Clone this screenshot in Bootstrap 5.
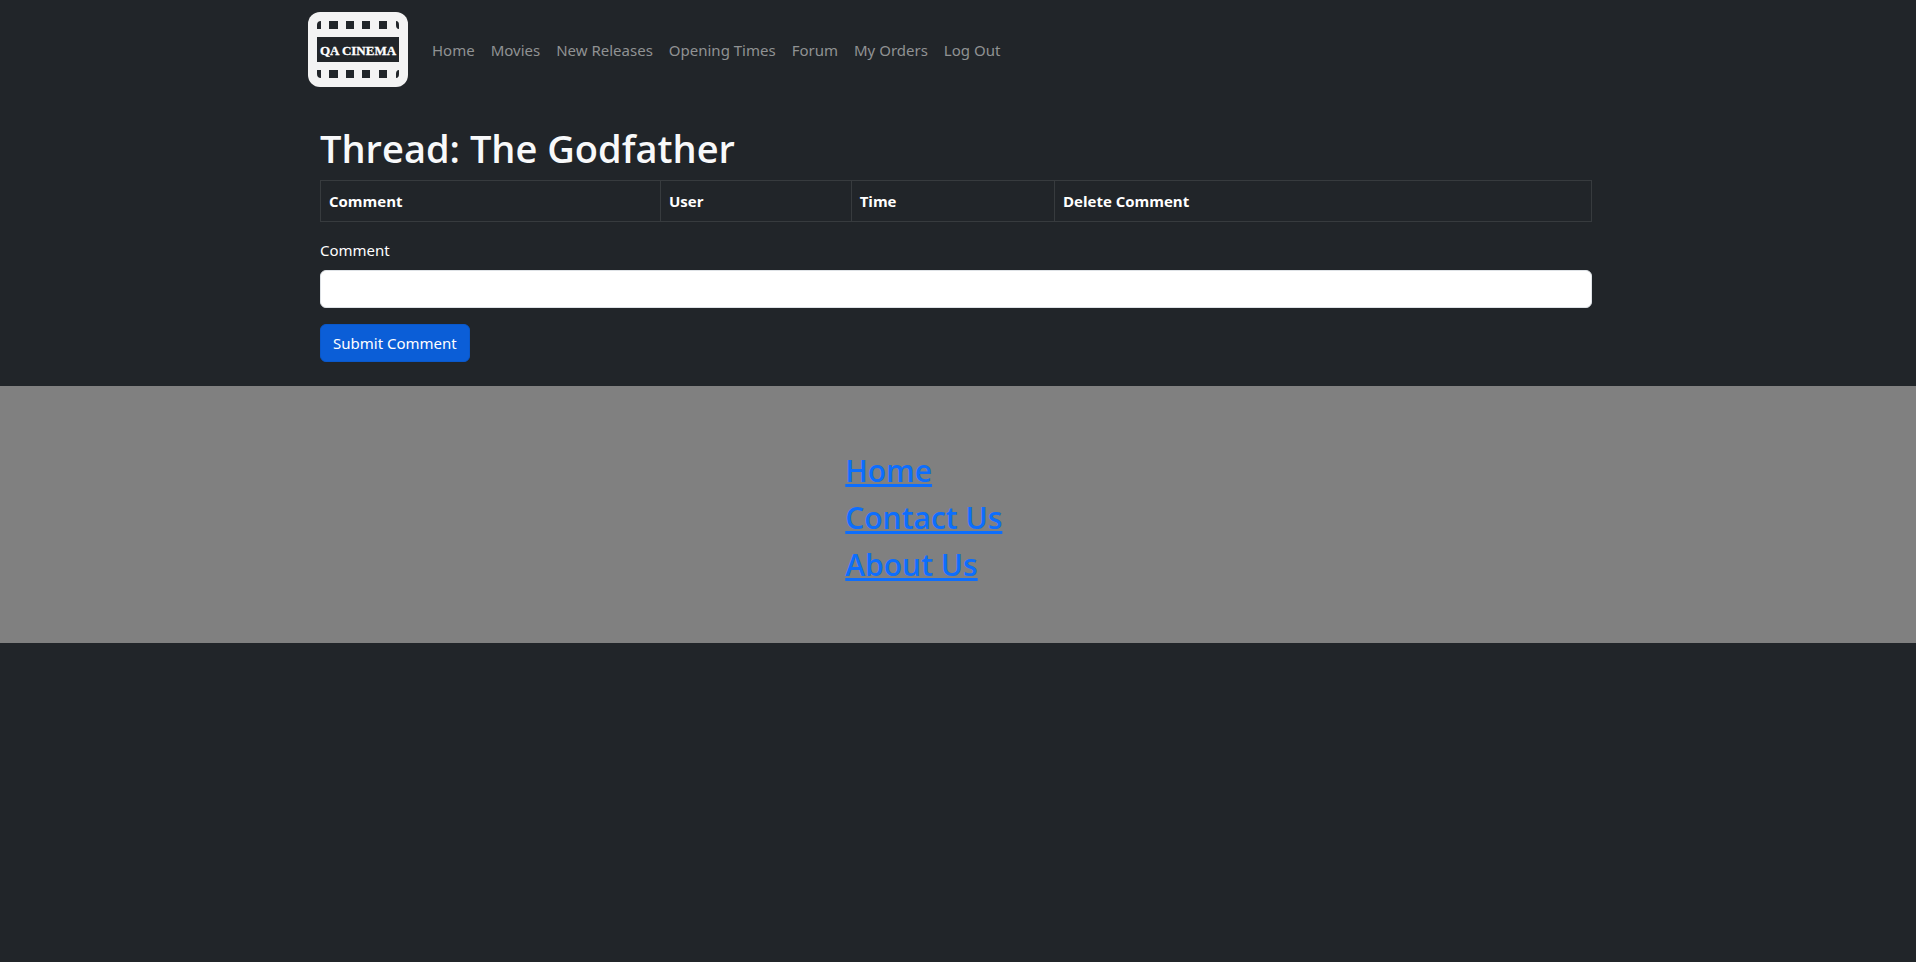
<!DOCTYPE html>
<html lang="en">
<head>
<meta charset="utf-8">
<meta name="viewport" content="width=device-width, initial-scale=1">
<title>QA Cinema - Thread</title>
<link href="https://cdn.jsdelivr.net/npm/bootstrap@5.3.0/dist/css/bootstrap.min.css" rel="stylesheet">
<style>
body { font-family: "Segoe UI", "Open Sans", "Noto Sans", sans-serif; font-size: 15px; line-height: 24px; background: #212529; color: #fff; }
.site-nav { --bs-navbar-color: #909293; --bs-navbar-hover-color: #c8c9ca; --bs-navbar-padding-y: 7px; }
.site-nav .nav-link, .submit-btn, .thread-form label { font-family: "Segoe UI", "Noto Sans", sans-serif; font-size: 15px; }
.thread-title { font-size: 38px; line-height: 47px; padding-top: 2px; font-weight: 600; color: #f8f9fa; }
.thread-table { --bs-table-bg: #212529; --bs-table-color: #fff; --bs-table-border-color: #373b3e; }
.col-comment { width: 26.75%; }
.col-user { width: 15%; }
.col-time { width: 16%; }
.comment-input { height: 38px; background: #fff; border-color: #dee2e6; }
.submit-btn { --bs-btn-bg: #0b5ed7; --bs-btn-border-color: #0a58ca; --bs-btn-font-size: 15px; --bs-btn-line-height: 24px; }
.site-footer { background: #808080; padding: 65px 0 59px 4px; }
.footer-links { margin-left: 44%; }
.footer-links a { color: #0d6efd; font-size: 30px; line-height: 39px; font-weight: 600; }
</style>
</head>
<body>
<div class="pe-1">
<nav class="navbar navbar-expand-lg site-nav" data-bs-theme="dark">
  <div class="container">
    <a class="navbar-brand" href="#" aria-label="QA Cinema">
      <svg class="d-block" width="100" height="75" viewBox="0 0 100 75">
        <rect width="100" height="75" rx="12" fill="#f3f3f3"/>
        <g fill="#212529">
          <rect x="9" y="25" width="82" height="25"/>
          <path d="M9 13q0-4 4-4v8H9zM21 9h9v8h-9zM38 9h8v8h-8zM54 9h8v8h-8zM71 9h8v8h-8zM88 9q3 0 3 4v4q-3 0-3-4z"/>
          <path d="M9 58h4v8q-4 0-4-4zM21 58h9v8h-9zM38 58h8v8h-8zM54 58h8v8h-8zM71 58h8v8h-8zM88 62q0-4 3-4v4q0 4-3 4z"/>
        </g>
        <text x="50" y="43" text-anchor="middle" font-family="Liberation Serif, serif" font-weight="700" font-size="13" fill="#fff" stroke="#fff" stroke-width=".3">QA CINEMA</text>
      </svg>
    </a>
    <button class="navbar-toggler" type="button" data-bs-toggle="collapse" data-bs-target="#mainNav" aria-controls="mainNav" aria-expanded="false" aria-label="Toggle navigation"><span class="navbar-toggler-icon"></span></button>
    <div class="collapse navbar-collapse" id="mainNav">
      <div class="navbar-nav">
        <a class="nav-link" href="#">Home</a>
        <a class="nav-link" href="#">Movies</a>
        <a class="nav-link" href="#">New Releases</a>
        <a class="nav-link" href="#">Opening Times</a>
        <a class="nav-link" href="#">Forum</a>
        <a class="nav-link" href="#">My Orders</a>
        <a class="nav-link" href="#">Log Out</a>
      </div>
    </div>
  </div>
</nav>
<main class="container py-4">
  <div class="px-2 mx-1">
    <h1 class="thread-title mb-2">Thread: The Godfather</h1>
    <table class="table table-bordered thread-table mb-3">
      <thead>
        <tr>
          <th class="col-comment" scope="col">Comment</th>
          <th class="col-user" scope="col">User</th>
          <th class="col-time" scope="col">Time</th>
          <th scope="col">Delete Comment</th>
        </tr>
      </thead>
    </table>
    <form class="thread-form">
      <div class="mb-3">
        <label class="d-block mb-2" for="comment">Comment</label>
        <input class="form-control comment-input" type="text" id="comment" name="comment">
      </div>
      <button class="btn btn-primary submit-btn" type="button">Submit Comment</button>
    </form>
  </div>
</main>
</div>
<footer class="site-footer">
  <div class="footer-links d-flex flex-column align-items-start gap-2">
    <a href="#">Home</a>
    <a href="#">Contact Us</a>
    <a href="#">About Us</a>
  </div>
</footer>
<script src="https://cdn.jsdelivr.net/npm/bootstrap@5.3.0/dist/js/bootstrap.bundle.min.js"></script>
</body>
</html>
